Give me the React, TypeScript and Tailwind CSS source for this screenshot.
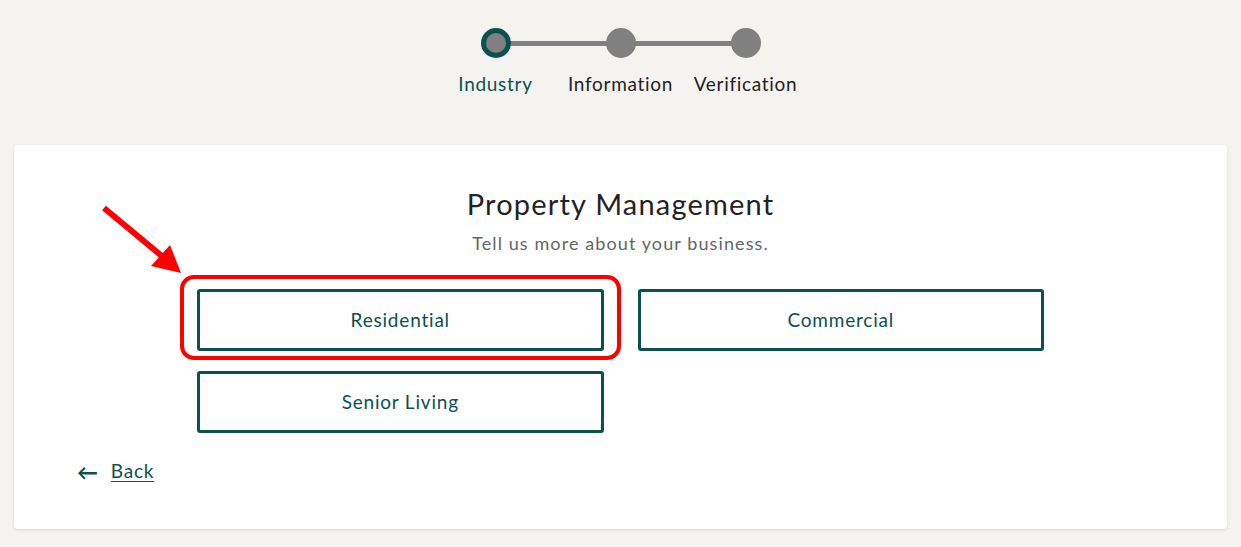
import React from "react";

const steps = [
  { label: "Industry", active: true },
  { label: "Information", active: false },
  { label: "Verification", active: false },
];

const options = ["Residential", "Commercial", "Senior Living"];

export default function App() {
  return (
    <div
      className="min-h-screen w-full bg-[#f4f3ef] px-[14px] pt-[28px] pb-[18px]"
      style={{ fontFamily: "Lato, 'Open Sans', sans-serif" }}
    >
      {/* Stepper */}
      <div className="flex justify-center">
        <div className="relative flex">
          <div className="absolute left-[62px] right-[62px] top-[13px] h-[5px] bg-[#808080]" />
          {steps.map((s) => (
            <div key={s.label} className="relative flex w-[125px] flex-col items-center">
              <div
                className={`h-[30px] w-[30px] rounded-full bg-[#808080] ${
                  s.active ? "border-[5px] border-[#0b5150]" : ""
                }`}
              />
              <span
                className={`mt-[15px] whitespace-nowrap text-[19px] leading-[22px] tracking-[0.7px] ${
                  s.active ? "text-[#0b5150]" : "text-[#1f2226]"
                }`}
              >
                {s.label}
              </span>
            </div>
          ))}
        </div>
      </div>

      {/* Card */}
      <div className="mt-[50px] h-[384px] rounded-[4px] bg-white px-[63px] pt-[42px] shadow-[0_1px_3px_rgba(0,0,0,0.12)]">
        <h1 className="text-center text-[29px] leading-[34px] tracking-[1.2px] text-[#1f2226]">
          Property Management
        </h1>
        <p className="mt-[11px] text-center text-[18px] leading-[22px] tracking-[1.1px] text-[#5f6868]">
          Tell us more about your business.
        </p>

        <div className="mx-auto mt-[35px] grid w-[847px] grid-cols-2 gap-x-[34px] gap-y-[20px]">
          {options.map((o, i) => (
            <div key={o} className="relative">
              <button className="flex h-[62px] w-full items-center justify-center rounded-[3px] border-[3px] border-[#0b5150] bg-white text-[19px] tracking-[0.8px] text-[#0b5150]">
                {o}
              </button>
              {i === 0 && (
                <>
                  <div className="pointer-events-none absolute -left-[17px] -right-[17px] -top-[14px] -bottom-[9px] rounded-[14px] border-[4px] border-[#ff0000]" />
                  <svg
                    className="pointer-events-none absolute -left-[96px] -top-[84px]"
                    width="82"
                    height="70"
                    viewBox="0 0 82 70"
                  >
                    <line x1="3" y1="3" x2="62" y2="52" stroke="#ff0000" strokeWidth="6" strokeLinecap="butt" />
                    <polygon points="80,68 50,61 69,40" fill="#ff0000" />
                  </svg>
                </>
              )}
            </div>
          ))}
        </div>

        <a href="#" className="mt-[24px] inline-flex items-center gap-[12px] text-[19px] tracking-[0.8px] text-[#0b5150]">
          <span className="text-[21px] font-bold leading-none">←</span>
          <span className="underline underline-offset-[3px]">Back</span>
        </a>
      </div>
    </div>
  );
}
